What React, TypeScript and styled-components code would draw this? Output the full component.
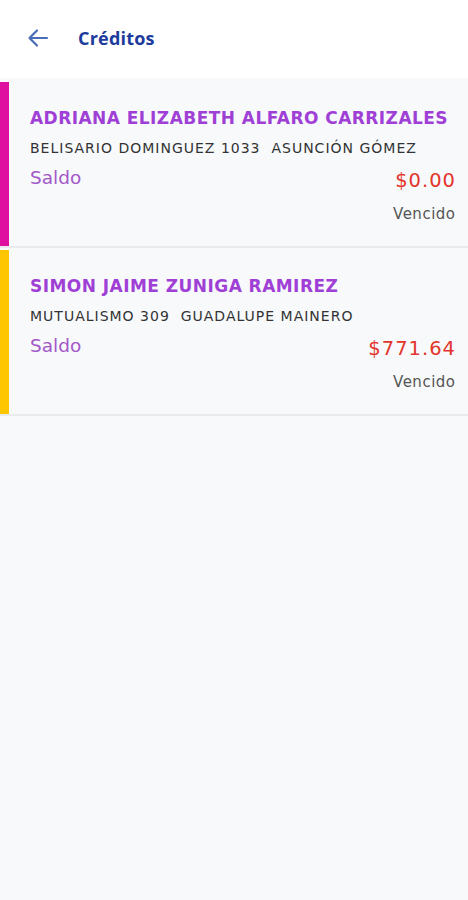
import React from 'react';
import styled, { createGlobalStyle } from 'styled-components';

const GlobalStyle = createGlobalStyle`
    html, body {
        margin: 0;
        padding: 0;
        background-color: #f7f9fb;
    }
    body {
        font-family: 'Open Sans', 'Liberation Sans', sans-serif;
    }
`;

const palette = {
    header_blue: '#1d3b9c',
    arrow_blue: '#4a6db8',
    purple: '#a03fd6',
    light_purple: '#a458c8',
    red: '#e3352b',
    text: '#333333',
    gray: '#555555',
    line: '#e8eaee',
    bg: '#f7f9fb',
};

const cardFont = `'DejaVu Sans', 'Open Sans', sans-serif`;

const Page = styled.div`
    width: 468px;
    min-height: 900px;
    background-color: ${palette.bg};
`;

const Header = styled.header`
    height: 78px;
    background-color: white;
    display: flex;
    align-items: center;
    padding: 0 0 3px 26px;
    box-sizing: border-box;

    .back-icon {
        display: block;
        cursor: pointer;
    }
`;

const Title = styled.h1`
    margin: 0 0 0 28px;
    font-size: 18px;
    font-weight: 700;
    color: ${palette.header_blue};
    letter-spacing: 0.2px;
`;

const List = styled.div`
    padding-top: 2px;
`;

const Item = styled.div`
    padding-top: 2px;
    border-bottom: 2px solid ${palette.line};
`;

const Card = styled.div<{ $color: string }>`
    display: flex;
    height: 164px;
    font-family: ${cardFont};

    &::before {
        content: '';
        width: 9px;
        flex-shrink: 0;
        background-color: ${(p) => p.$color};
    }
`;

const Body = styled.div`
    flex: 1;
    padding: 24px 13px 0 21px;
    min-width: 0;
`;

const Name = styled.div`
    font-size: 17px;
    line-height: 24px;
    font-weight: 700;
    letter-spacing: 0.45px;
    color: ${palette.purple};
    white-space: nowrap;
`;

const Address = styled.div`
    margin-top: 8px;
    font-size: 14px;
    line-height: 20px;
    letter-spacing: 1px;
    color: ${palette.text};
    white-space: pre;
`;

const BalanceRow = styled.div`
    margin-top: 8px;
    display: flex;
    justify-content: space-between;
    align-items: flex-start;
`;

const BalanceLabel = styled.span`
    font-size: 18.5px;
    line-height: 24px;
    color: ${palette.light_purple};
`;

const BalanceSide = styled.div`
    display: flex;
    flex-direction: column;
    align-items: flex-end;
    padding-top: 3px;
`;

const Amount = styled.span`
    font-size: 19.5px;
    line-height: 24px;
    letter-spacing: 1px;
    margin-right: -1px;
    color: ${palette.red};
`;

const Status = styled.span`
    margin-top: 11px;
    font-size: 15px;
    line-height: 20px;
    letter-spacing: 0.5px;
    margin-right: -0.5px;
    color: ${palette.gray};
`;

const BackArrow = () => (
    <svg className="back-icon" width="24" height="24" viewBox="0 0 24 24" fill="none">
        <path
            d="M21 12H3.5M11 4.5L3.5 12L11 19.5"
            stroke={palette.arrow_blue}
            strokeWidth="2.2"
            strokeLinecap="round"
            strokeLinejoin="round"
        />
    </svg>
);

interface ICredit {
    name: string;
    address: string;
    amount: string;
    status: string;
    color: string;
}

const credits: ICredit[] = [
    {
        name: 'ADRIANA ELIZABETH ALFARO CARRIZALES',
        address: 'BELISARIO DOMINGUEZ 1033  ASUNCIÓN GÓMEZ',
        amount: '$0.00',
        status: 'Vencido',
        color: '#df0fa0',
    },
    {
        name: 'SIMON JAIME ZUNIGA RAMIREZ',
        address: 'MUTUALISMO 309  GUADALUPE MAINERO',
        amount: '$771.64',
        status: 'Vencido',
        color: '#fdc600',
    },
];

const App: React.FC = () => {
    return (
        <Page>
            <GlobalStyle />
            <Header>
                <BackArrow />
                <Title>Créditos</Title>
            </Header>
            <List>
                {credits.map((credit) => (
                    <Item key={credit.name}>
                        <Card $color={credit.color}>
                            <Body>
                                <Name>{credit.name}</Name>
                                <Address>{credit.address}</Address>
                                <BalanceRow>
                                    <BalanceLabel>Saldo</BalanceLabel>
                                    <BalanceSide>
                                        <Amount>{credit.amount}</Amount>
                                        <Status>{credit.status}</Status>
                                    </BalanceSide>
                                </BalanceRow>
                            </Body>
                        </Card>
                    </Item>
                ))}
            </List>
        </Page>
    );
};

export default App;
